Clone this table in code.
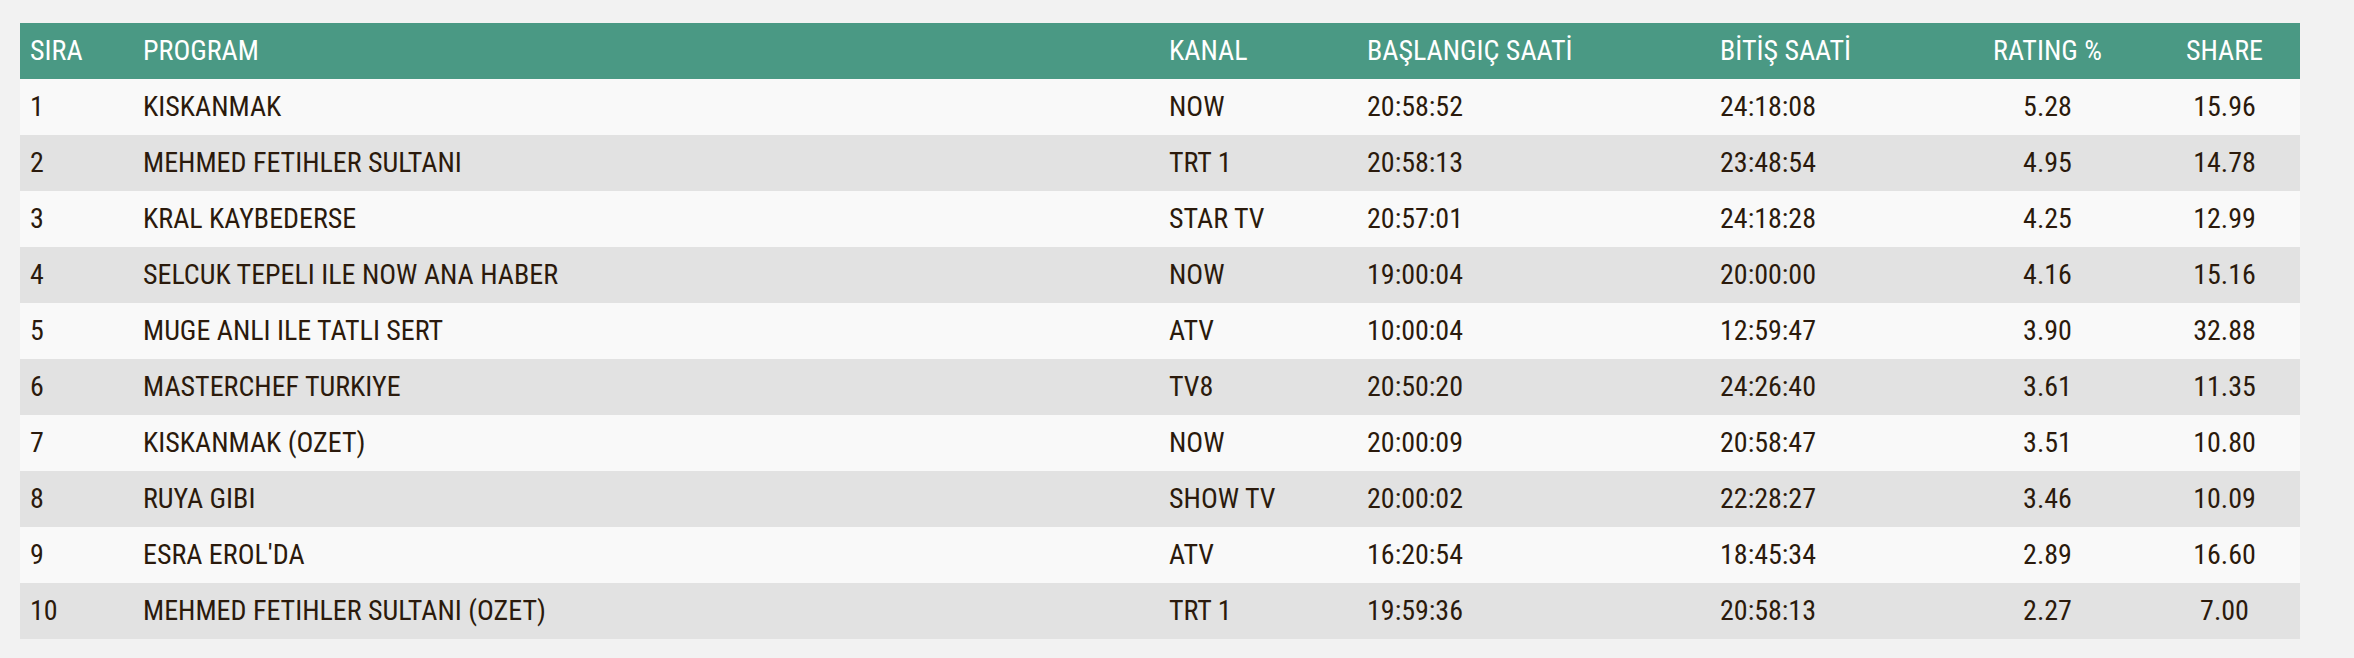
import React from 'react';

const rows = [
  { no: 1, program: 'KISKANMAK', kanal: 'NOW', start: '20:58:52', end: '24:18:08', rating: '5.28', share: '15.96' },
  { no: 2, program: 'MEHMED FETIHLER SULTANI', kanal: 'TRT 1', start: '20:58:13', end: '23:48:54', rating: '4.95', share: '14.78' },
  { no: 3, program: 'KRAL KAYBEDERSE', kanal: 'STAR TV', start: '20:57:01', end: '24:18:28', rating: '4.25', share: '12.99' },
  { no: 4, program: 'SELCUK TEPELI ILE NOW ANA HABER', kanal: 'NOW', start: '19:00:04', end: '20:00:00', rating: '4.16', share: '15.16' },
  { no: 5, program: 'MUGE ANLI ILE TATLI SERT', kanal: 'ATV', start: '10:00:04', end: '12:59:47', rating: '3.90', share: '32.88' },
  { no: 6, program: 'MASTERCHEF TURKIYE', kanal: 'TV8', start: '20:50:20', end: '24:26:40', rating: '3.61', share: '11.35' },
  { no: 7, program: 'KISKANMAK (OZET)', kanal: 'NOW', start: '20:00:09', end: '20:58:47', rating: '3.51', share: '10.80' },
  { no: 8, program: 'RUYA GIBI', kanal: 'SHOW TV', start: '20:00:02', end: '22:28:27', rating: '3.46', share: '10.09' },
  { no: 9, program: "ESRA EROL'DA", kanal: 'ATV', start: '16:20:54', end: '18:45:34', rating: '2.89', share: '16.60' },
  { no: 10, program: 'MEHMED FETIHLER SULTANI (OZET)', kanal: 'TRT 1', start: '19:59:36', end: '20:58:13', rating: '2.27', share: '7.00' },
];

const cols = 'grid grid-cols-[113px_1026px_198px_353px_236px_203px_151px]';

export default function App() {
  return (
    <div
      className="min-h-screen bg-[#f2f2f2] pl-[20px] pt-[23px]"
      style={{ fontFamily: '"Roboto Condensed", Roboto, "Liberation Sans", sans-serif', fontStretch: 'condensed' }}
    >
      <div className="w-[2280px] text-[28px] leading-none">
        {/* header */}
        <div className={`${cols} h-[56px] items-center bg-[#4a9984] text-white`}>
          <div className="pl-[10px]">SIRA</div>
          <div className="pl-[10px]">PROGRAM</div>
          <div className="pl-[10px]">KANAL</div>
          <div className="pl-[10px]">BAŞLANGIÇ SAATİ</div>
          <div className="pl-[10px]">BİTİŞ SAATİ</div>
          <div className="text-center">RATING %</div>
          <div className="text-center">SHARE</div>
        </div>

        {rows.map((r, i) => (
          <div
            key={r.no}
            className={`${cols} h-[56px] items-center text-[#2b1a0c] ${i % 2 === 0 ? 'bg-[#f9f9f9]' : 'bg-[#e2e2e2]'}`}
          >
            <div className="pl-[10px]">{r.no}</div>
            <div className="pl-[10px]">{r.program}</div>
            <div className="pl-[10px]">{r.kanal}</div>
            <div className="pl-[10px]">{r.start}</div>
            <div className="pl-[10px]">{r.end}</div>
            <div className="text-center">{r.rating}</div>
            <div className="text-center">{r.share}</div>
          </div>
        ))}
      </div>
    </div>
  );
}
